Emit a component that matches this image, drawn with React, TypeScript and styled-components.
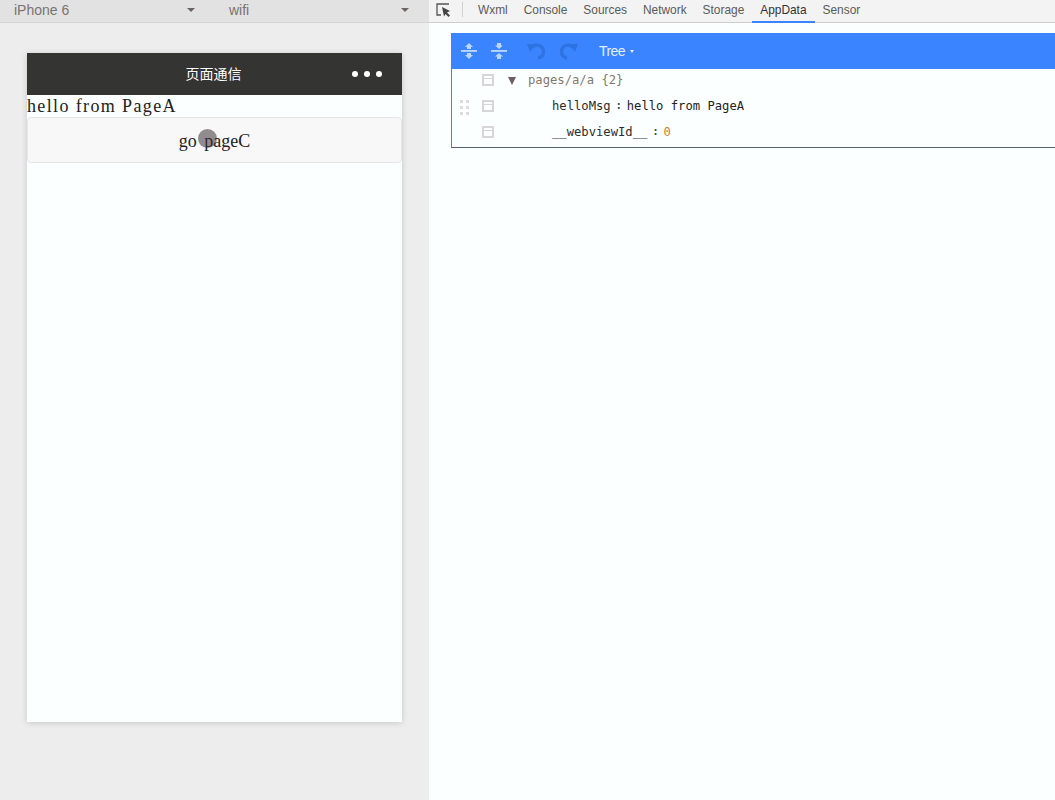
import React from "react";
import styled, { createGlobalStyle } from "styled-components";

const Global = createGlobalStyle`
  html, body { margin: 0; padding: 0; background: #fcffff; }
  #root { width: 1055px; height: 800px; overflow: hidden; }
`;

const Page = styled.div`
  display: flex;
  width: 1055px;
  height: 800px;
  font-family: "Liberation Sans", Arial, sans-serif;
`;

const Simulator = styled.div`
  width: 429px;
  flex: none;
  background: #ededed;
  display: flex;
  flex-direction: column;
`;

const DeviceBar = styled.div`
  height: 20px;
  padding-bottom: 2px;
  flex: none;
  background: #e2e2e2;
  border-bottom: 1px solid #d4d4d4;
  display: flex;
  align-items: center;
  color: #7a7370;
  font-size: 14px;
`;

const DeviceSelect = styled.div<{ $w: number; $pad: number; $right: number }>`
  width: ${(p) => p.$w}px;
  padding-left: ${(p) => p.$pad}px;
  padding-right: ${(p) => p.$right}px;
  box-sizing: border-box;
  display: flex;
  align-items: center;
  justify-content: space-between;
  height: 18px;
`;

const Caret = styled.span`
  width: 0;
  height: 0;
  margin-top: -1px;
  border-left: 4px solid transparent;
  border-right: 4px solid transparent;
  border-top: 4px solid #6d6462;
`;

const PhoneWrap = styled.div`
  padding: 30px 0 0 27px;
`;

const Phone = styled.div`
  width: 375px;
  height: 669px;
  background: #fcffff;
  box-shadow: 0 1px 6px rgba(0, 0, 0, 0.16);
  display: flex;
  flex-direction: column;
`;

const NavBar = styled.div`
  height: 40px;
  padding: 0 2px 2px 0;
  flex: none;
  background: #343432;
  color: #fff;
  font-size: 14px;
  font-family: "Noto Sans CJK SC", sans-serif;
  display: flex;
  align-items: center;
  justify-content: center;
  position: relative;
`;

const Dots = styled.div`
  position: absolute;
  right: 20px;
  top: 18px;
  display: flex;
  gap: 6px;
`;

const Dot = styled.span`
  width: 6px;
  height: 6px;
  border-radius: 50%;
  background: #fff;
`;

const Hello = styled.div`
  font-family: "Liberation Serif", serif;
  font-size: 18px;
  letter-spacing: 1.37px;
  line-height: 22px;
  height: 22px;
  color: #222;
`;

const GoButton = styled.div`
  height: 42px;
  padding-top: 2px;
  border: 1px solid #e6e6e6;
  border-radius: 4px;
  background: #f9f8f8;
  display: flex;
  align-items: center;
  justify-content: center;
  font-family: "Liberation Serif", serif;
  font-size: 18px;
  word-spacing: 3px;
  color: #222;
  position: relative;
  width: 373px;
`;

const Touch = styled.span`
  position: absolute;
  left: 170px;
  top: 11px;
  width: 19px;
  height: 19px;
  border-radius: 50%;
  background: rgba(60, 50, 55, 0.55);
`;

const Devtools = styled.div`
  flex: 1;
  min-width: 0;
  background: #fcffff;
  display: flex;
  flex-direction: column;
`;

const TabBar = styled.div`
  height: 22px;
  flex: none;
  background: #f3f3f3;
  border-bottom: 1px solid #cdcdcd;
  display: flex;
  align-items: stretch;
  font-size: 11.9px;
  color: #5a5a5a;
`;

const InspectBox = styled.div`
  width: 34px;
  display: flex;
  align-items: center;
  padding: 0 0 3px 7px;
  box-sizing: border-box;
  flex: none;
  position: relative;
  &::after {
    content: "";
    position: absolute;
    right: 0;
    top: 2px;
    height: 15px;
    width: 1px;
    background: #d0d0d0;
  }
`;

const Tabs = styled.div`
  display: flex;
  padding-left: 7px;
`;

const Tab = styled.div<{ $active?: boolean }>`
  padding: 0 8px 1px;
  display: flex;
  align-items: center;
  margin-bottom: -1px;
  height: 20px;
  color: ${(p) => (p.$active ? "#333" : "#5a5a5a")};
  border-bottom: 2px solid ${(p) => (p.$active ? "#3a84ff" : "transparent")};
`;

const Panel = styled.div`
  padding: 10px 0 0 22px;
`;

const Editor = styled.div`
  width: 604px;
  height: 114px;
  border-left: 1px solid #3a84ff;
  border-bottom: 1px solid #54606e;
`;

const Toolbar = styled.div`
  height: 36px;
  margin-left: -1px;
  background: #3a84ff;
  display: flex;
  align-items: center;
  padding-left: 10px;
`;

const ToolIcon = styled.svg<{ $gap: number; $w: number }>`
  width: ${(p) => p.$w}px;
  height: 18px;
  flex: none;
  margin-right: ${(p) => p.$gap}px;
`;

const ModeLabel = styled.span`
  color: #e4eeff;
  font-size: 14px;
  letter-spacing: -0.6px;
  display: flex;
  align-items: center;
  gap: 5px;
`;

const SmallCaret = styled.span`
  width: 0;
  height: 0;
  border-left: 2.5px solid transparent;
  border-right: 2.5px solid transparent;
  border-top: 3px solid #e4eeff;
`;

const Tree = styled.div`
  font-family: "DejaVu Sans Mono", monospace;
  font-size: 12.2px;
`;

const Row = styled.div<{ $h: number }>`
  height: ${(p) => p.$h}px;
  display: flex;
  align-items: center;
  position: relative;
  padding-left: 30px;
`;

const Handle = styled.svg`
  position: absolute;
  left: 8px;
  top: 9px;
  width: 9px;
  height: 15px;
`;

const RowBox = styled.span`
  width: 8px;
  height: 8px;
  flex: none;
  border: 2px solid #d6d6d6;
  position: relative;
  &::after {
    content: "";
    position: absolute;
    left: 0;
    right: 0;
    top: 2px;
    height: 1px;
    background: #d6d6d6;
  }
`;

const Arrow = styled.span`
  width: 0;
  height: 0;
  margin-left: 14px;
  margin-top: 2px;
  border-left: 4.5px solid transparent;
  border-right: 4.5px solid transparent;
  border-top: 8px solid #6e5f5f;
`;

const RootLabel = styled.span`
  margin-left: 12px;
  color: #84786f;
`;

const Key = styled.span`
  margin-left: 58px;
  color: #2c2c2c;
`;

const Colon = styled.span`
  color: #444;
  margin: 0 5px;
  font-size: 10px;
  font-weight: bold;
`;

const StringValue = styled.span`
  color: #222;
`;

const NumberValue = styled.span`
  color: #c8802f;
`;

const ICON_LIGHT = "#bcd6ff";
const ICON_DARK = "#2e73e2";

function Expand() {
  return (
    <ToolIcon viewBox="0 0 16 18" $gap={14} $w={16}>
      <path d="M8 1 L12 5 H10 V7 H6 V5 H4 Z M8 17 L4 13 H6 V11 H10 V13 H12 Z" fill={ICON_LIGHT} />
      <rect x="0" y="8.2" width="16" height="1.5" fill="#dce9ff" />
    </ToolIcon>
  );
}

function Collapse() {
  return (
    <ToolIcon viewBox="0 0 16 18" $gap={20} $w={16}>
      <path d="M8 7 L4 3.5 H6 V1 H10 V3.5 H12 Z M8 11 L12 14.5 H10 V17 H6 V14.5 H4 Z" fill={ICON_LIGHT} />
      <rect x="0" y="8.2" width="16" height="1.5" fill="#dce9ff" />
    </ToolIcon>
  );
}

function Undo() {
  return (
    <ToolIcon viewBox="0 0 18 18" $gap={15} $w={18}>
      <path d="M5 5.5 A6.5 6.5 0 1 1 11 16" fill="none" stroke={ICON_DARK} strokeWidth="3.4" />
      <path d="M0 2 L9 2 L3 10 Z" fill={ICON_DARK} />
    </ToolIcon>
  );
}

function Redo() {
  return (
    <ToolIcon viewBox="0 0 18 18" $gap={21} $w={18}>
      <path d="M13 5.5 A6.5 6.5 0 1 0 7 16" fill="none" stroke={ICON_DARK} strokeWidth="3.4" />
      <path d="M18 2 L9 2 L15 10 Z" fill={ICON_DARK} />
    </ToolIcon>
  );
}

export default function App() {
  return (
    <>
      <Global />
      <Page>
        <Simulator>
          <DeviceBar>
            <DeviceSelect $w={215} $pad={14} $right={20}>
              iPhone 6
              <Caret />
            </DeviceSelect>
            <DeviceSelect $w={214} $pad={14} $right={20}>
              wifi
              <Caret />
            </DeviceSelect>
          </DeviceBar>
          <PhoneWrap>
            <Phone>
              <NavBar>
                页面通信
                <Dots>
                  <Dot />
                  <Dot />
                  <Dot />
                </Dots>
              </NavBar>
              <Hello>hello from PageA</Hello>
              <GoButton>
                go pageC
                <Touch />
              </GoButton>
            </Phone>
          </PhoneWrap>
        </Simulator>
        <Devtools>
          <TabBar>
            <InspectBox>
              <svg width="16" height="14" viewBox="0 0 16 14">
                <path d="M13 1 H1 V12 H5" fill="none" stroke="#555" strokeWidth="1.3" />
                <path d="M6 4 L14 8 L11 9.5 L14 12.5 L12.5 14 L9.5 11 L8 13.5 Z" fill="#444" />
              </svg>
            </InspectBox>
            <Tabs>
              <Tab>Wxml</Tab>
              <Tab>Console</Tab>
              <Tab>Sources</Tab>
              <Tab>Network</Tab>
              <Tab>Storage</Tab>
              <Tab $active>AppData</Tab>
              <Tab>Sensor</Tab>
            </Tabs>
          </TabBar>
          <Panel>
            <Editor>
              <Toolbar>
                <Expand />
                <Collapse />
                <Undo />
                <Redo />
                <ModeLabel>
                  Tree
                  <SmallCaret />
                </ModeLabel>
              </Toolbar>
              <Tree>
                <Row $h={22}>
                  <RowBox />
                  <Arrow />
                  <RootLabel>pages/a/a {"{2}"}</RootLabel>
                </Row>
                <Row $h={29}>
                  <Handle viewBox="0 0 9 15">
                    <path d="M0 0h3v3H0z M6 0h3v3H6z M0 6h3v3H0z M6 6h3v3H6z M0 12h3v3H0z M6 12h3v3H6z" fill="#dcdcdc" />
                  </Handle>
                  <RowBox />
                  <Key>helloMsg</Key>
                  <Colon>:</Colon>
                  <StringValue>hello from PageA</StringValue>
                </Row>
                <Row $h={23}>
                  <RowBox />
                  <Key>__webviewId__</Key>
                  <Colon>:</Colon>
                  <NumberValue>0</NumberValue>
                </Row>
              </Tree>
            </Editor>
          </Panel>
        </Devtools>
      </Page>
    </>
  );
}
